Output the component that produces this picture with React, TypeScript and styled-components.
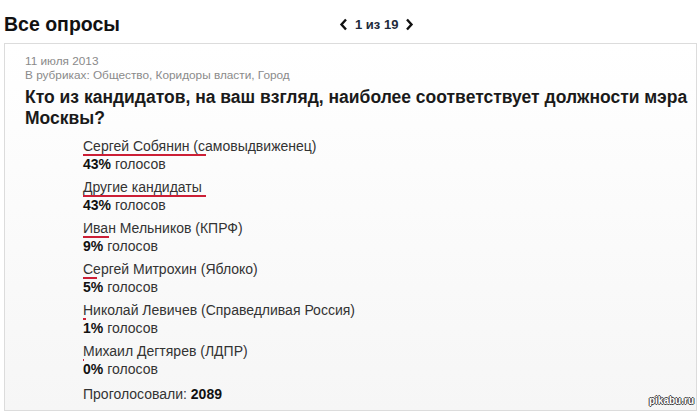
import styled, { createGlobalStyle } from "styled-components";

const GlobalStyle = createGlobalStyle`
  body {
    margin: 0;
    background: #ffffff;
    font-family: "Liberation Sans", Arial, sans-serif;
  }
`;

const options = [
  { name: "Сергей Собянин (самовыдвиженец)", percent: 43 },
  { name: "Другие кандидаты", percent: 43 },
  { name: "Иван Мельников (КПРФ)", percent: 9 },
  { name: "Сергей Митрохин (Яблоко)", percent: 5 },
  { name: "Николай Левичев (Справедливая Россия)", percent: 1 },
  { name: "Михаил Дегтярев (ЛДПР)", percent: 0 },
];

const Chevron = ({ dir }: { dir: "left" | "right" }) => (
  <svg width="9" height="13" viewBox="0 0 9 13">
    <polyline
      points={dir === "left" ? "7,1.5 2.5,6.5 7,11.5" : "2,1.5 6.5,6.5 2,11.5"}
      fill="none"
      stroke="#111"
      strokeWidth="2.4"
    />
  </svg>
);

const App = () => {
  return (
    <Page>
      <GlobalStyle />
      <Header>
        <Title>Все опросы</Title>
        <Pager>
          <Chevron dir="left" />
          <PagerText>1 из 19</PagerText>
          <Chevron dir="right" />
        </Pager>
      </Header>
      <Card>
        <Meta>11 июля 2013</Meta>
        <Meta>В рубриках: Общество, Коридоры власти, Город</Meta>
        <Question>
          Кто из кандидатов, на ваш взгляд, наиболее соответствует должности мэра
          <br />
          Москвы?
        </Question>
        <List>
          {options.map((o) => (
            <Option key={o.name}>
              <Name>
                {o.name}
                <Bar style={{ width: Math.max(1, o.percent * 2.86) }} />
              </Name>
              <Votes>
                <b>{o.percent}%</b> голосов
              </Votes>
            </Option>
          ))}
          <Total>
            Проголосовали: <b>2089</b>
          </Total>
        </List>
        <Watermark>pikabu.ru</Watermark>
      </Card>
    </Page>
  );
};

export default App;

const Page = styled.div`
  width: 700px;
  height: 414px;
  overflow: hidden;
  position: relative;
`;

const Header = styled.div`
  display: flex;
  align-items: center;
  height: 43px;
  padding-left: 4px;
`;

const Title = styled.div`
  width: 335px;
  font-size: 19.5px;
  font-weight: bold;
  color: #111;
  padding-top: 6px;
`;

const Pager = styled.div`
  display: flex;
  align-items: center;
  gap: 7px;
  padding-top: 6px;
`;

const PagerText = styled.span`
  font-size: 13px;
  font-weight: bold;
  color: #1e2a3a;
`;

const Card = styled.div`
  position: relative;
  margin-left: 4px;
  margin-right: 3px;
  height: 368px;
  border: 1px solid #dcdcdc;
  background: linear-gradient(#ffffff, #f6f6f6);
  padding: 10px 0 0 20px;
  box-sizing: border-box;
`;

const Meta = styled.div`
  font-size: 11.8px;
  line-height: 14px;
  color: #8a8a8a;
`;

const Question = styled.div`
  margin-top: 5px;
  font-size: 17.5px;
  line-height: 21px;
  font-weight: bold;
  color: #1a1a1a;
  white-space: nowrap;
`;

const List = styled.div`
  display: flex;
  flex-direction: column;
  gap: 5px;
  padding-left: 58px;
  margin-top: 8px;
`;

const Option = styled.div`
  display: flex;
  flex-direction: column;
`;

const Name = styled.div`
  position: relative;
  font-size: 14px;
  line-height: 18px;
  color: #333;
`;

const Bar = styled.span`
  position: absolute;
  left: 0;
  bottom: -1px;
  height: 2px;
  background: #cc1f36;
`;

const Votes = styled.div`
  font-size: 14px;
  line-height: 18px;
  color: #333;

  b {
    color: #111;
  }
`;

const Total = styled.div`
  font-size: 14px;
  line-height: 18px;
  color: #333;
  margin-top: 2px;

  b {
    color: #111;
  }
`;

const Watermark = styled.div`
  position: absolute;
  right: 2px;
  bottom: 4px;
  font-size: 10px;
  font-weight: bold;
  color: #fff;
  text-shadow: -1px 0 #444, 1px 0 #444, 0 -1px #444, 0 1px #444;
`;
